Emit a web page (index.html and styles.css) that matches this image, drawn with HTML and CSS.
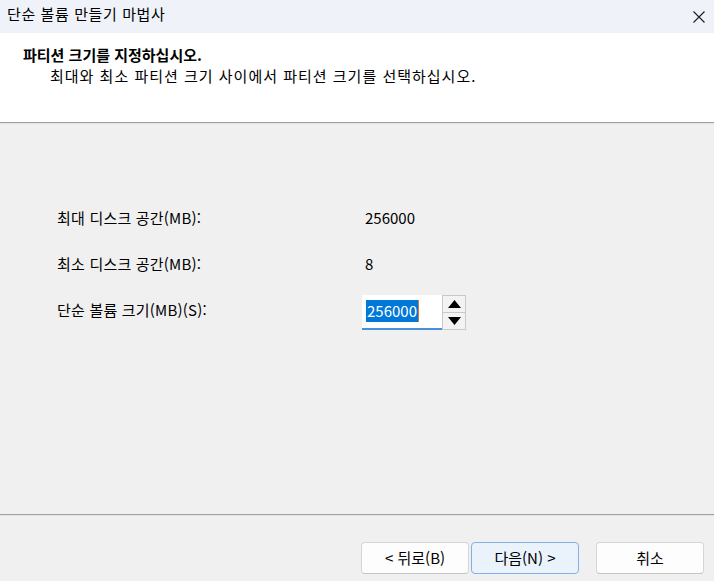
FILE: index.html
```html
<!DOCTYPE html>
<html lang="ko">
<head>
<meta charset="utf-8">
<title>단순 볼륨 만들기 마법사</title>
<link rel="stylesheet" href="styles.css">
</head>
<body>
<div class="window">
  <div class="titlebar">
    <span class="title">단순 볼륨 만들기 마법사</span>
    <span class="close">
      <svg width="12" height="12" viewBox="0 0 12 12"><path d="M0.5 0.5 L11.5 11.5 M11.5 0.5 L0.5 11.5" stroke="#1b1b1b" stroke-width="1.1" fill="none"/></svg>
    </span>
  </div>
  <div class="header">
    <div class="header-title">파티션 크기를 지정하십시오.</div>
    <div class="header-sub">최대와 최소 파티션 크기 사이에서 파티션 크기를 선택하십시오.</div>
  </div>
  <div class="sep"></div>
  <div class="content">
    <div class="form">
      <div class="label">최대 디스크 공간(MB):</div>
      <div class="value">256000</div>
      <div class="label">최소 디스크 공간(MB):</div>
      <div class="value">8</div>
      <div class="label">단순 볼륨 크기(MB)(S):</div>
      <div class="spinner">
        <div class="spin-input"><span class="selected">256000</span><span class="caret"></span></div>
        <div class="spin-buttons">
          <div class="spin-btn"><svg width="13" height="8" viewBox="0 0 13 8"><path d="M6.5 0 L13 8 L0 8 Z" fill="#000"/></svg></div>
          <div class="spin-btn"><svg width="13" height="8" viewBox="0 0 13 8"><path d="M0 0 L13 0 L6.5 8 Z" fill="#000"/></svg></div>
        </div>
      </div>
    </div>
  </div>
  <div class="sep"></div>
  <div class="footer">
    <div class="btn-pair">
      <div class="btn">&lt; 뒤로(B)</div>
      <div class="btn btn-default">다음(N) &gt;</div>
    </div>
    <div class="btn">취소</div>
  </div>
</div>
</body>
</html>
```
FILE: styles.css
```css
* { box-sizing: border-box; }
html, body {
  margin: 0;
  padding: 0;
  width: 714px;
  height: 581px;
  overflow: hidden;
}
body {
  font-family: "Noto Sans CJK KR", "Noto Sans", sans-serif;
  font-size: 15px;
  color: #000;
  background: #f0f0f0;
}
.window {
  display: flex;
  flex-direction: column;
  height: 581px;
}
.titlebar {
  height: 33px;
  background: #eff3f9;
  display: flex;
  align-items: center;
  justify-content: space-between;
  padding: 0 9px 6px 7px;
  flex: none;
}
.title {
  line-height: 20px;
  letter-spacing: 0.6px;
}
.close {
  display: flex;
  align-items: center;
  padding-top: 6px;
}
.header {
  height: 89px;
  background: #ffffff;
  padding: 11px 0 0 23px;
  flex: none;
}
.header-title {
  font-weight: bold;
  line-height: 21px;
}
.header-sub {
  line-height: 21px;
  padding-left: 27px;
  letter-spacing: 1px;
}
.sep {
  height: 2px;
  border-top: 1px solid #a0a0a0;
  border-bottom: 1px solid #e3e3e3;
  flex: none;
}
.content {
  flex: 1;
  padding: 71px 0 0 57px;
}
.form {
  display: grid;
  grid-template-columns: 305px auto;
  grid-auto-rows: 46px;
  align-items: center;
}
.label, .value {
  line-height: 20px;
}
.label {
  letter-spacing: 0.2px;
}
.value {
  padding-left: 3px;
}
.spinner {
  display: flex;
  height: 35px;
  width: 104px;
  margin-top: 4px;
}
.spin-input {
  width: 80px;
  background: #fff;
  border-bottom: 2px solid #4a8fd8;
  display: flex;
  align-items: center;
  padding-left: 4px;
}
.selected {
  background: #0078d7;
  color: #fff;
  line-height: 22px;
  padding: 0 1px;
}
.caret {
  width: 1px;
  height: 22px;
  background: #d07a3a;
}
.spin-buttons {
  width: 24px;
  display: flex;
  flex-direction: column;
  border: 1px solid #c9c9c9;
  background: #f3f3f3;
}
.spin-btn {
  flex: 1;
  display: flex;
  align-items: center;
  justify-content: center;
}
.spin-btn + .spin-btn {
  border-top: 1px solid #c9c9c9;
}
.footer {
  height: 65px;
  flex: none;
  display: flex;
  align-items: flex-start;
  justify-content: flex-end;
  padding: 26px 10px 0 0;
  gap: 17px;
}
.btn-pair {
  display: flex;
  gap: 2px;
}
.btn {
  width: 108px;
  height: 32px;
  background: #fdfdfd;
  border: 1px solid #d5d5d5;
  border-bottom-color: #c4c4c4;
  border-radius: 4px;
  display: flex;
  align-items: center;
  justify-content: center;
  line-height: 20px;
}
.btn-default {
  background: #eaf3fc;
  border-color: #7fb2e6;
}
```
